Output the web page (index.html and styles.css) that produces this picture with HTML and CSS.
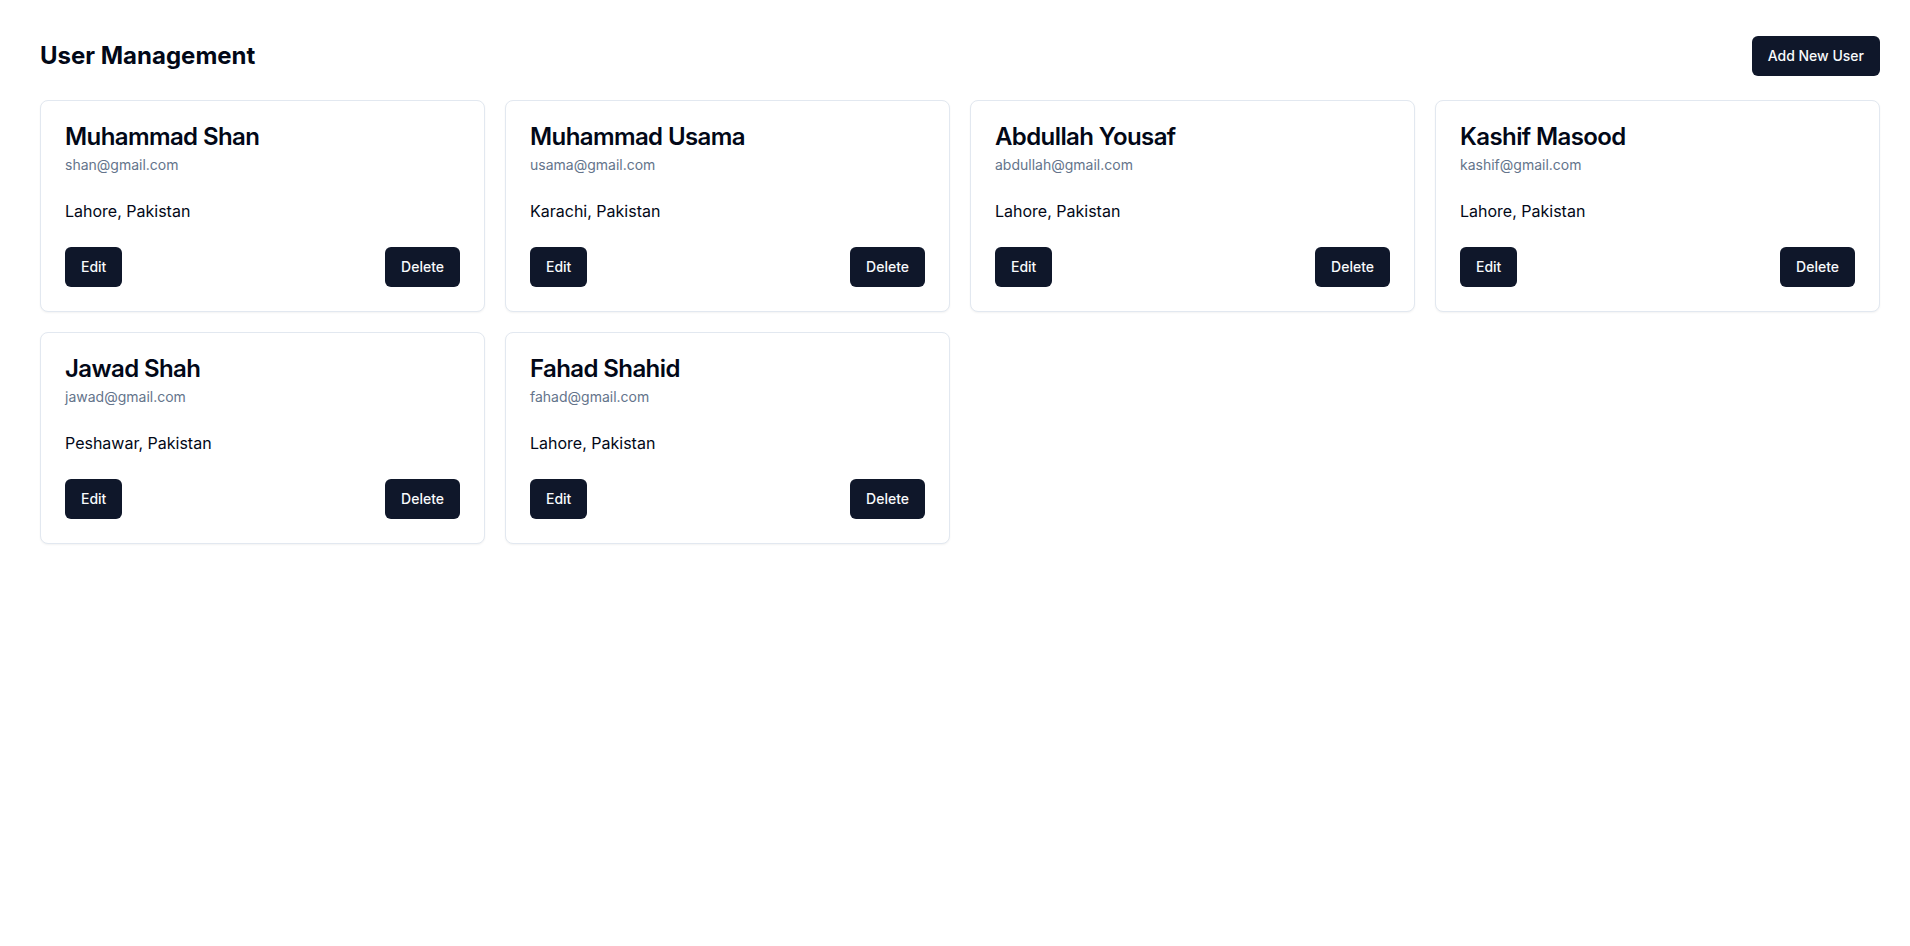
FILE: index.html
```html
<!DOCTYPE html>
<html lang="en">
<head>
<meta charset="utf-8">
<title>User Management</title>
<link rel="stylesheet" href="styles.css">
</head>
<body>
<main class="page">
  <header class="page-header">
    <h1 class="page-title">User Management</h1>
    <button class="btn">Add New User</button>
  </header>
  <section class="grid">
    <article class="card">
      <div class="card-header">
        <h3 class="card-title">Muhammad Shan</h3>
        <p class="card-desc">shan@gmail.com</p>
      </div>
      <div class="card-content"><p>Lahore, Pakistan</p></div>
      <div class="card-footer"><button class="btn">Edit</button><button class="btn">Delete</button></div>
    </article>
    <article class="card">
      <div class="card-header">
        <h3 class="card-title">Muhammad Usama</h3>
        <p class="card-desc">usama@gmail.com</p>
      </div>
      <div class="card-content"><p>Karachi, Pakistan</p></div>
      <div class="card-footer"><button class="btn">Edit</button><button class="btn">Delete</button></div>
    </article>
    <article class="card">
      <div class="card-header">
        <h3 class="card-title">Abdullah Yousaf</h3>
        <p class="card-desc">abdullah@gmail.com</p>
      </div>
      <div class="card-content"><p>Lahore, Pakistan</p></div>
      <div class="card-footer"><button class="btn">Edit</button><button class="btn">Delete</button></div>
    </article>
    <article class="card">
      <div class="card-header">
        <h3 class="card-title">Kashif Masood</h3>
        <p class="card-desc">kashif@gmail.com</p>
      </div>
      <div class="card-content"><p>Lahore, Pakistan</p></div>
      <div class="card-footer"><button class="btn">Edit</button><button class="btn">Delete</button></div>
    </article>
    <article class="card">
      <div class="card-header">
        <h3 class="card-title">Jawad Shah</h3>
        <p class="card-desc">jawad@gmail.com</p>
      </div>
      <div class="card-content"><p>Peshawar, Pakistan</p></div>
      <div class="card-footer"><button class="btn">Edit</button><button class="btn">Delete</button></div>
    </article>
    <article class="card">
      <div class="card-header">
        <h3 class="card-title">Fahad Shahid</h3>
        <p class="card-desc">fahad@gmail.com</p>
      </div>
      <div class="card-content"><p>Lahore, Pakistan</p></div>
      <div class="card-footer"><button class="btn">Edit</button><button class="btn">Delete</button></div>
    </article>
  </section>
</main>
</body>
</html>
```

FILE: styles.css
```css
* { box-sizing: border-box; }
html, body { margin: 0; padding: 0; background: #ffffff; }
body {
  font-family: Inter, "Noto Sans", sans-serif;
  color: #020817;
  font-size: 16px;
  line-height: 1.5;
}
h1, h3, p { margin: 0; }

.page {
  padding: 36px 30px 40px 40px;
}

.page-header {
  display: flex;
  align-items: center;
  justify-content: space-between;
  margin-bottom: 24px;
}
.page-title {
  font-size: 24px;
  line-height: 32px;
  font-weight: 700;
  color: #020817;
}

.btn {
  height: 40px;
  padding: 0 16px;
  border: none;
  border-radius: 6px;
  background: #0f172a;
  color: #f8fafc;
  font-family: Inter, "Noto Sans", sans-serif;
  font-size: 14px;
  font-weight: 500;
  line-height: 20px;
  cursor: pointer;
}

.grid {
  display: grid;
  grid-template-columns: repeat(4, 1fr);
  gap: 20px;
}

.card {
  border: 1px solid #e2e8f0;
  border-radius: 8px;
  background: #ffffff;
  box-shadow: 0 1px 2px rgba(0, 0, 0, 0.05);
}
.card-header {
  padding: 24px;
  display: flex;
  flex-direction: column;
  gap: 6px;
}
.card-title {
  font-size: 24px;
  line-height: 1;
  font-weight: 600;
  letter-spacing: -0.025em;
  color: #020817;
}
.card-desc {
  font-size: 14px;
  line-height: 20px;
  color: #64748b;
}
.card-content {
  padding: 0 24px 24px;
  font-size: 16px;
  line-height: 24px;
  color: #020817;
}
.card-footer {
  padding: 0 24px 24px;
  display: flex;
  align-items: center;
  justify-content: space-between;
}
```
